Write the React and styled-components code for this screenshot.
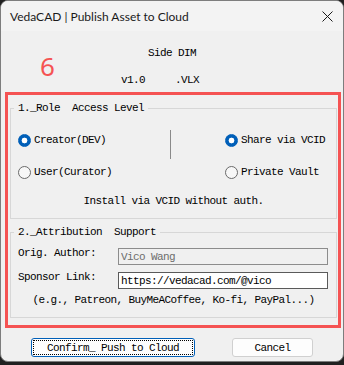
import React from 'react';
import styled, { createGlobalStyle } from 'styled-components';

const mono = `"Liberation Mono", "DejaVu Sans Mono", monospace`;

const GlobalStyle = createGlobalStyle`
  html, body {
    margin: 0;
    padding: 0;
    background: #202020;
  }
  body {
    width: 344px;
    height: 365px;
    overflow: hidden;
  }
`;

const Window = styled.div`
  box-sizing: border-box;
  width: 344px;
  height: 362px;
  background: #f0f0f0;
  border: 1px solid #7d7d7d;
  border-radius: 8px;
  overflow: hidden;
  display: flex;
  flex-direction: column;
  font-family: ${mono};
  font-size: 11px;
  letter-spacing: -0.6px;
  color: #000;
`;

const TitleBar = styled.div`
  height: 30px;
  flex: none;
  display: flex;
  align-items: center;
  justify-content: space-between;
  padding: 0 10px 0 9px;
  background: #f3f3f3;
  font-family: Lato, "Noto Sans", sans-serif;
  font-size: 12px;
  letter-spacing: 0;
  color: #1a1a1a;
`;

const Header = styled.div`
  position: relative;
  height: 61px;
  box-sizing: border-box;
  padding-top: 15px;
  display: flex;
  flex-direction: column;
  gap: 13px;
`;

const Line = styled.div`
  line-height: 14px;
  height: 14px;
  white-space: pre;
  text-align: ${({ $indent }) => ($indent ? 'left' : 'center')};
  padding-left: ${({ $indent }) => $indent || 0}px;
`;

const Badge = styled.div`
  position: absolute;
  left: 39px;
  top: 20px;
  font-family: "Noto Sans", "Open Sans", sans-serif;
  font-size: 26px;
  line-height: 30px;
  letter-spacing: 0;
  color: #f55353;
`;

const RedFrame = styled.div`
  box-sizing: border-box;
  width: 336px;
  margin-left: 4px;
  border: 3px solid #f55353;
  padding: 6px 1px 7px 2px;
  display: flex;
  flex-direction: column;
  gap: 6px;
`;

const Group = styled.fieldset`
  margin: 0;
  min-width: 0;
  border: 1px solid #d7d7d7;
  padding: 0 7px 10px;
`;

const Legend = styled.legend`
  padding: 0 4px;
  margin-left: -4px;
  line-height: 14px;
  white-space: pre;
`;

const OptionRow = styled.div`
  display: flex;
  align-items: flex-start;
  margin-top: 15px;
`;

const OptionCol = styled.div`
  display: flex;
  flex-direction: column;
  gap: 16px;
  padding-top: 2px;
  width: ${({ $width }) => $width || 'auto'};
`;

const Separator = styled.div`
  width: 1px;
  height: 29px;
  background: #8a8a8a;
  margin-right: 54px;
`;

const RadioLabel = styled.label`
  display: flex;
  align-items: center;
  gap: 3px;
  height: 16px;
  line-height: 14px;
  white-space: pre;
`;

const RadioDot = styled.span`
  box-sizing: border-box;
  width: 13px;
  height: 13px;
  border-radius: 50%;
  flex: none;
  border: 1px solid ${({ $checked }) => ($checked ? '#005fb8' : '#6a6a6a')};
  background: ${({ $checked }) =>
    $checked
      ? 'radial-gradient(circle, #ffffff 0 2.6px, #005fb8 3.2px)'
      : '#f7f7f7'};
`;

const Note = styled.div`
  text-align: center;
  line-height: 14px;
  margin-top: ${({ $top }) => $top}px;
  white-space: pre;
`;

const FieldRow = styled.div`
  display: flex;
  align-items: flex-start;
  margin-top: ${({ $top }) => $top}px;
`;

const FieldLabel = styled.div`
  width: 100px;
  line-height: 14px;
  white-space: pre;
`;

const Input = styled.input`
  box-sizing: border-box;
  width: 210px;
  height: 17px;
  margin: 2px 0 0;
  padding: 0 2px;
  font-family: ${mono};
  font-size: 11px;
  letter-spacing: -0.6px;
  border: 1px solid ${({ disabled }) => (disabled ? '#8c8c8c' : '#5a5a5a')};
  border-radius: 0;
  background: ${({ disabled }) => (disabled ? '#f0f0f0' : '#ffffff')};
  color: ${({ disabled }) => (disabled ? '#6d6d6d' : '#000')};
  outline: none;
`;

const ButtonRow = styled.div`
  display: flex;
  gap: 37px;
  padding-left: 30px;
  margin-top: 10px;
`;

const Button = styled.button`
  box-sizing: border-box;
  width: ${({ $width }) => $width}px;
  height: 19px;
  padding: 0;
  font-family: ${mono};
  font-size: 11px;
  letter-spacing: -0.6px;
  color: #000;
  background: #fdfdfd;
  border: 1px solid ${({ $primary }) => ($primary ? '#005fb8' : '#d0d0d0')};
  border-radius: 3px;
  white-space: pre;
  outline: ${({ $primary }) => ($primary ? '1px dotted #000' : 'none')};
  outline-offset: -3px;
`;

const CloseIcon = () => (
  <svg width="11" height="11" viewBox="0 0 11 11">
    <path d="M0.5 0.5 L10.5 10.5 M10.5 0.5 L0.5 10.5" stroke="#1a1a1a" strokeWidth="1" fill="none" />
  </svg>
);

const Radio = ({ checked, children }) => (
  <RadioLabel>
    <RadioDot $checked={checked} />
    {children}
  </RadioLabel>
);

const App = () => (
  <>
    <GlobalStyle />
    <Window>
      <TitleBar>
        <span>VedaCAD | Publish Asset to Cloud</span>
        <CloseIcon />
      </TitleBar>
      <Header>
        <Line>Side DIM</Line>
        <Line $indent={120}>{'v1.0     .VLX'}</Line>
        <Badge>6</Badge>
      </Header>
      <RedFrame>
        <Group>
          <Legend>{'1._Role  Access Level'}</Legend>
          <OptionRow>
            <OptionCol $width="152px">
              <Radio checked>Creator(DEV)</Radio>
              <Radio>User(Curator)</Radio>
            </OptionCol>
            <Separator />
            <OptionCol>
              <Radio checked>Share via VCID</Radio>
              <Radio>Private Vault</Radio>
            </OptionCol>
          </OptionRow>
          <Note $top={14}>Install via VCID without auth.</Note>
        </Group>
        <Group>
          <Legend>{'2._Attribution  Support'}</Legend>
          <FieldRow $top={7}>
            <FieldLabel>Orig. Author:</FieldLabel>
            <Input disabled value="Vico Wang" readOnly />
          </FieldRow>
          <FieldRow $top={5}>
            <FieldLabel>Sponsor Link:</FieldLabel>
            <Input value="https://vedacad.com/@vico" readOnly />
          </FieldRow>
          <Note $top={4}>(e.g., Patreon, BuyMeACoffee, Ko-fi, PayPal...)</Note>
        </Group>
      </RedFrame>
      <ButtonRow>
        <Button $primary $width={164}>Confirm_ Push to Cloud</Button>
        <Button $width={81}>Cancel</Button>
      </ButtonRow>
    </Window>
  </>
);

export default App;
